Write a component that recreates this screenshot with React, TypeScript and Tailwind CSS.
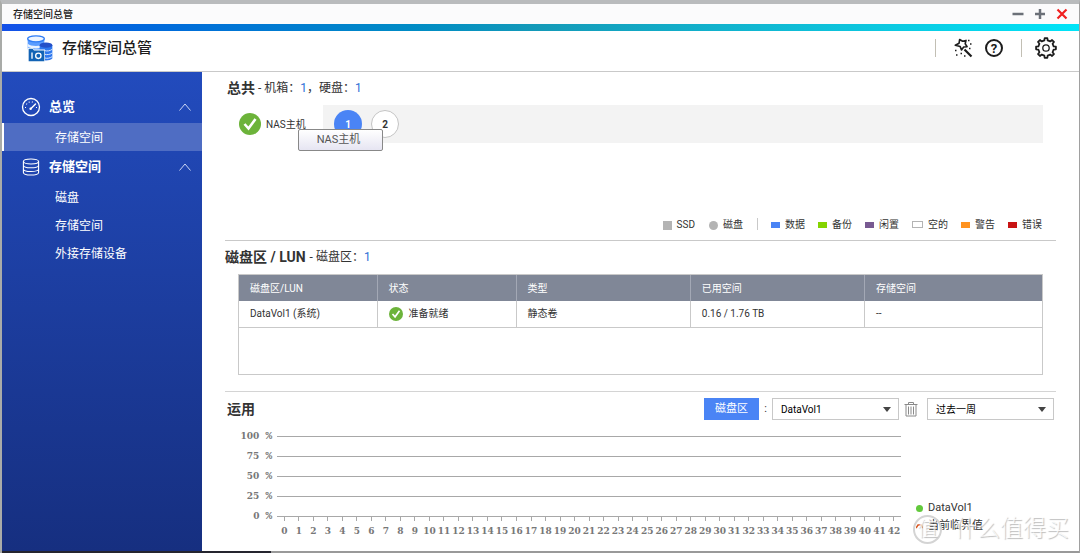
import type { ReactNode } from "react";

type MenuItem = { label: string; active?: boolean };
type MenuGroup = { title: string; icon: ReactNode; items: MenuItem[] };

const MENU: MenuGroup[] = [
  {
    title: "总览",
    icon: <GaugeIcon />,
    items: [{ label: "存储空间", active: true }],
  },
  {
    title: "存储空间",
    icon: <DiskStackIcon />,
    items: [{ label: "磁盘" }, { label: "存储空间" }, { label: "外接存储设备" }],
  },
];

const LEGEND = [
  { label: "数据", color: "bg-[#4a84f5]" },
  { label: "备份", color: "bg-[#84d400]" },
  { label: "闲置", color: "bg-[#785a92]" },
  { label: "空的", color: "border border-[#b4b4b4] bg-white" },
  { label: "警告", color: "bg-[#ff9320]" },
  { label: "错误", color: "bg-[#c81414]" },
];

const COLUMNS = [
  { label: "磁盘区/LUN", width: "w-[17.2%]" },
  { label: "状态", width: "w-[17.3%]" },
  { label: "类型", width: "w-[21.7%]" },
  { label: "已用空间", width: "w-[21.7%]" },
  { label: "存储空间", width: "w-[22.1%]" },
];

const Y_LABELS = [100, 75, 50, 25, 0];
const X_LABELS = Array.from({ length: 43 }, (_, i) => i);

function gearPath(teeth: number, outer: number, inner: number) {
  const step = (Math.PI * 2) / teeth;
  const points: string[] = [];
  for (let i = 0; i < teeth; i++) {
    const a = i * step - Math.PI / 2;
    const corners = [
      [outer, -0.17],
      [outer, 0.17],
      [inner, 0.27],
      [inner, 0.73],
    ];
    for (const [r, t] of corners) {
      const x = 12 + r * Math.cos(a + t * step);
      const y = 12 + r * Math.sin(a + t * step);
      points.push(`${x.toFixed(2)} ${y.toFixed(2)}`);
    }
  }
  return `M${points.join("L")}Z`;
}

function LogoIcon() {
  return (
    <svg viewBox="0 0 78 80" className="h-[27px] w-[26px] shrink-0" aria-hidden="true">
      <path d="M2 10v32c8 8 42 8 50 0V10z" fill="#5b9dff" />
      <path d="M2 26c10 9 40 9 50 0v8c-10 8-40 8-50 0z" fill="#e8f2ff" />
      <ellipse cx="27" cy="11" rx="25" ry="9" fill="#eef5ff" stroke="#2f7df6" strokeWidth="4" />
      <path d="M38 30v40c6 8 32 8 38 0V30z" fill="#2f78ee" />
      <path d="M52 46c8 3 18 1 24-4M52 57c8 3 18 1 24-4M52 68c8 3 18 1 24-4" fill="none" stroke="#d7e8ff" strokeWidth="3" />
      <ellipse cx="57" cy="30" rx="19" ry="8" fill="#2450c8" />
      <path d="M2 38h15l4 5h33v37H2z" fill="#fff" />
      <path d="M5 41h12l4 5h31v32H5z" fill="#1263b5" />
      <path d="M15 52v19" stroke="#fff" strokeWidth="4" />
      <circle cx="34" cy="62" r="8" fill="none" stroke="#fff" strokeWidth="4" />
    </svg>
  );
}

function GaugeIcon() {
  return (
    <svg viewBox="0 0 20 20" className="h-5 w-5" fill="none" stroke="currentColor" aria-hidden="true">
      <circle cx="10" cy="10" r="8.5" strokeWidth="1.3" />
      <path d="M4 10.5h1M5.3 6.7l.8.6M8 4.6l.4 1M11.5 4.5l-.2 1M15 10.5h1" strokeWidth="1.2" />
      <path d="M10 11.5l4.5-4.5" strokeWidth="1.5" strokeLinecap="round" />
      <circle cx="9.6" cy="11.8" r="1.2" fill="currentColor" stroke="none" />
    </svg>
  );
}

function DiskStackIcon() {
  return (
    <svg viewBox="0 0 20 20" className="h-5 w-5" fill="none" stroke="currentColor" strokeWidth="1.1" aria-hidden="true">
      <ellipse cx="10" cy="4.5" rx="7.6" ry="2.5" />
      <path d="M2.4 4.5v11c0 3.4 15.2 3.4 15.2 0v-11M2.4 8.2c0 3.4 15.2 3.4 15.2 0M2.4 11.9c0 3.4 15.2 3.4 15.2 0" />
    </svg>
  );
}

function WandIcon() {
  return (
    <svg viewBox="0 0 20 20" className="h-5 w-5" fill="none" stroke="currentColor" aria-hidden="true">
      <path d="M6.6 1.5l3 1.8 3.4-.9-.8 3.4 1.9 2.9-3.4.3-2.2 2.9-1.3-3.3-4.9-1.4 3.800-2z" strokeWidth="1.6" strokeLinejoin="round" />
      <path d="M11.500 11.500l7 7" strokeWidth="2.200" />
      <path d="M15 2.500h1.500M17 6h1.500M16 10.500h1.500M2 12.500h1.500M3 17h1.500M7.500 15.500h1.500M11 18h1.500" strokeWidth="1.300" />
    </svg>
  );
}

function GearIcon() {
  return (
    <svg viewBox="0 0 24 24" className="h-6 w-6" fill="none" stroke="currentColor" strokeLinejoin="round" aria-hidden="true">
      <path d={gearPath(8, 10, 7.8)} strokeWidth="1.8" />
      <circle cx="12" cy="12" r="3.2" strokeWidth="1.3" />
    </svg>
  );
}

function CheckBadge({ className }: { className: string }) {
  return (
    <svg viewBox="0 0 22 22" className={className} role="img" aria-label="正常">
      <circle cx="11" cy="11" r="11" fill="#6cb33a" />
      <path d="M5.500 11l4 4.500 7-9.500" fill="none" stroke="#fff" strokeWidth="2.600" />
    </svg>
  );
}

function TrashIcon() {
  return (
    <svg viewBox="0 0 14 16" className="h-4 w-3.5" fill="none" stroke="currentColor" aria-hidden="true">
      <path d="M.5 3.500h13M4.500 3V1.500h5V3M2 4v11h10V4M4.500 5.500v8M7 5.500v8M9.500 5.500v8" />
    </svg>
  );
}

function Select({ label, options }: { label: string; options: string[] }) {
  return (
    <div className="relative w-[127px]">
      <select
        aria-label={label}
        className="h-[22px] w-full appearance-none border border-[#c8c8c8] bg-white pl-2 text-[10px] text-black"
      >
        {options.map((o) => (
          <option key={o}>{o}</option>
        ))}
      </select>
      <svg viewBox="0 0 8 5" className="pointer-events-none absolute right-2 top-[9px] h-[5px] w-2" aria-hidden="true">
        <path d="M0 0h8L4 5z" fill="#444" />
      </svg>
    </div>
  );
}

function TitleBar() {
  return (
    <div className="flex h-5 items-center justify-between bg-[#fbfbfc] pl-[11px] pr-[11px] text-[10px] text-[#222]">
      <span className="font-medium">存储空间总管</span>
      <div className="flex items-center gap-2.5 text-[#6b7078]">
        <button type="button" aria-label="最小化">
          <svg viewBox="0 0 12 12" className="h-3 w-3" stroke="currentColor" strokeWidth="2.500">
            <path d="M.5 6h11" />
          </svg>
        </button>
        <button type="button" aria-label="最大化">
          <svg viewBox="0 0 12 12" className="h-3 w-3" stroke="currentColor" strokeWidth="2.500">
            <path d="M1 6h10M6 1v10" />
          </svg>
        </button>
        <button type="button" aria-label="关闭" className="text-[#f02020]">
          <svg viewBox="0 0 12 12" className="h-3 w-3" stroke="currentColor" strokeWidth="2.200">
            <path d="M1.500 1.500l9 9M10.500 1.500l-9 9" />
          </svg>
        </button>
      </div>
    </div>
  );
}

function Header() {
  return (
    <header className="flex h-[41px] items-center border-b border-[#c9c9c9] bg-white pb-1.5 pl-[25px] pr-[21px] text-[#1c1c1c]">
      <LogoIcon />
      <h1 className="ml-[9px] text-[15px] font-medium leading-5">存储空间总管</h1>
      <div className="ml-auto flex items-center">
        <span className="h-[18px] w-px bg-[#c2bfb4]" />
        <button type="button" aria-label="工具" className="ml-[17px]">
          <WandIcon />
        </button>
        <button
          type="button"
          aria-label="帮助"
          className="ml-3 flex h-[18px] w-[18px] items-center justify-center rounded-full border-2 border-[#1c1c1c] text-[13px] font-bold leading-none"
        >
          ?
        </button>
        <span className="ml-[18px] h-[18px] w-px bg-[#c2bfb4]" />
        <button type="button" aria-label="设置" className="ml-3">
          <GearIcon />
        </button>
      </div>
    </header>
  );
}

function Sidebar() {
  return (
    <nav className="w-[200px] shrink-0 bg-linear-to-b from-[#224bbd] to-[#162f80] pt-[19px] text-white">
      {MENU.map((group) => (
        <div key={group.title}>
          <button type="button" className="flex h-8 w-full items-center pl-[19px] pr-[11px] text-[13px] font-bold">
            {group.icon}
            <span className="ml-2">{group.title}</span>
            <svg viewBox="0 0 12 8" className="ml-auto h-2 w-3" fill="none" stroke="#c9d5f5" aria-hidden="true">
              <path d="M.5 7.500L6 1l5.500 6.500" />
            </svg>
          </button>
          <ul>
            {group.items.map((item) => (
              <li key={item.label}>
                <a
                  href="#"
                  className={
                    item.active
                      ? "flex h-7 items-center border-l-2 border-white bg-[#4f6dc3] pl-[51px] pt-px text-xs"
                      : "flex h-7 items-center pl-[53px] pt-px text-xs"
                  }
                >
                  {item.label}
                </a>
              </li>
            ))}
          </ul>
        </div>
      ))}
    </nav>
  );
}

function Overview() {
  return (
    <section className="border-b border-[#c9c9c9] pb-2 pt-2">
      <h2 className="flex h-4 items-center pl-0.5 text-xs">
        <span className="text-sm font-bold">总共</span>
        <span className="ml-[3px]">- 机箱：</span>
        <span className="text-[#2f6fd6]">1</span>，硬盘：
        <span className="text-[#2f6fd6]">1</span>
      </h2>

      <div className="relative ml-[14px] mr-[13px] mt-[9px] flex h-[38px] items-center">
        <CheckBadge className="h-[22px] w-[22px]" />
        <span className="ml-[5px] w-[57px] text-[10px]">NAS主机</span>
        <div className="flex h-full flex-1 items-center gap-[9px] bg-[#f3f3f3] pl-[11px] text-[10px] font-bold">
          <button type="button" className="h-7 w-7 rounded-full bg-[#4a84f5] text-white">
            1
          </button>
          <button type="button" className="h-7 w-7 rounded-full border border-[#c4c4c4] bg-white">
            2
          </button>
        </div>
        <div
          role="tooltip"
          className="absolute left-[59px] top-6 flex h-[22px] w-[85px] items-center justify-center rounded-xs border border-[#888] bg-linear-to-b from-white to-[#e6e5f2] pr-1 text-[11px] text-[#555]"
        >
          NAS主机
        </div>
      </div>

      <div className="mr-[14px] mt-[73px] flex h-4 items-center justify-end text-[10px]">
        <span className="mr-[5px] mt-0.5 h-[9px] w-[9px] bg-[#b4b4b4]" />
        SSD
        <span className="ml-3.5 mr-[5px] mt-0.5 h-[9px] w-[9px] rounded-full bg-[#b4b4b4]" />
        磁盘
        <span className="ml-3.5 h-3 w-px bg-[#c9c9c9]" />
        {LEGEND.map((entry) => (
          <span key={entry.label} className="ml-[13px] flex items-center gap-[5px]">
            <span
              className={
                entry.label === "空的"
                  ? `mt-px h-[7px] w-[11px] ${entry.color}`
                  : `mt-0.5 h-[6px] w-[9px] ${entry.color}`
              }
            />
            {entry.label}
          </span>
        ))}
      </div>
    </section>
  );
}

function Volumes() {
  return (
    <section className="border-b border-[#d4d4d4] pb-4 pt-2">
      <h2 className="flex h-4 items-center text-xs">
        <span className="text-sm font-bold">磁盘区 / LUN</span>
        <span className="ml-1">- 磁盘区：</span>
        <span className="text-[#2f6fd6]">1</span>
      </h2>

      <div className="ml-[13px] mr-[13px] mt-[9px] min-h-[101px] border border-[#c9c9c9]">
        <table className="w-full table-fixed border-collapse text-left text-[10px]">
          <thead className="bg-[#808797] text-white">
            <tr className="h-[26px]">
              {COLUMNS.map((c) => (
                <th key={c.label} className={`${c.width} border-r border-[#a3a8b5] pl-[11px] font-normal last:border-r-0`}>
                  {c.label}
                </th>
              ))}
            </tr>
          </thead>
          <tbody>
            <tr className="h-[26px] border-b border-[#c9c9c9] *:border-r *:border-[#c9c9c9] *:pl-[11px] *:last:border-r-0">
              <td>DataVol1 (系统)</td>
              <td>
                <span className="flex items-center gap-1.5">
                  <CheckBadge className="h-3.5 w-3.5" />
                  准备就绪
                </span>
              </td>
              <td>静态卷</td>
              <td>0.16 / 1.76 TB</td>
              <td>--</td>
            </tr>
          </tbody>
        </table>
      </div>
    </section>
  );
}

function UsageChart() {
  return (
    <div className="mt-1.5 flex font-['DejaVu_Serif',serif] text-[9px] font-bold text-[#777]">
      <div className="mr-[5px] w-[47px]">
        {Y_LABELS.map((y) => (
          <div key={y} className="flex h-5 items-center justify-end gap-1.5 leading-none">
            {y}
            <span className="font-['Liberation_Mono',monospace] text-[11px]">%</span>
          </div>
        ))}
      </div>
      <div className="flex-1 pt-2.5">
        {Y_LABELS.slice(1).map((y) => (
          <div key={y} className="h-5 border-t border-[#a8a8a8]" />
        ))}
        <div className="flex border-t border-[#a8a8a8]">
          {X_LABELS.map((x) => (
            <div key={x} className="flex w-0 flex-1 flex-col items-center">
              <span className="h-1 w-px bg-[#a8a8a8]" />
              <span className="mt-1 leading-3">{x}</span>
            </div>
          ))}
        </div>
      </div>
      <ul className="flex w-[155px] flex-col justify-end pb-0.5 pl-[15px] font-[Roboto,'Noto_Sans_CJK_SC',sans-serif] text-[11px] font-normal text-[#333]">
        <li className="flex h-[18px] items-center gap-[5px]">
          <span className="h-[7px] w-[7px] rounded-full bg-[#62c93c]" />
          DataVol1
        </li>
        <li className="flex h-[18px] items-center gap-[5px]">
          <svg viewBox="0 0 7 7" className="h-[7px] w-[7px]" fill="none" stroke="#d9581e" strokeWidth="1.500" aria-hidden="true">
            <path d="M0 5l2-3h3l2 3" />
          </svg>
          当前临界值
        </li>
      </ul>
    </div>
  );
}

function Usage() {
  return (
    <section className="pt-[6px]">
      <div className="flex h-[22px] items-center pr-0.5 text-[11px]">
        <h2 className="mr-auto pl-0.5 text-sm font-bold">运用</h2>
        <button type="button" className="h-[22px] w-[55px] bg-[#4a84f5] text-white">
          磁盘区
        </button>
        <span className="w-[13px] text-center">:</span>
        <Select label="磁盘区" options={["DataVol1"]} />
        <button type="button" aria-label="删除" className="mx-[5px] w-[18px] text-[#8a8a8a]">
          <TrashIcon />
        </button>
        <Select label="时间范围" options={["过去一周"]} />
      </div>
      <UsageChart />
    </section>
  );
}

function Watermark() {
  return (
    <div className="pointer-events-none absolute bottom-2 right-2.5 flex items-center gap-3 text-[23px] font-light leading-8 text-white/80 [text-shadow:1px_1px_1px_#bbb]">
      <span className="flex h-[29px] w-[29px] items-center justify-center rounded-full border-2 border-[#d4d4d4] text-xl">
        值
      </span>
      什么值得买
    </div>
  );
}

export default function App() {
  return (
    <div className="relative flex min-h-screen flex-col border-l-2 border-r border-t-4 border-l-[#a9aba8] border-r-[#a0a0a0] border-t-[#b9bbbd] bg-white font-[Roboto,'Noto_Sans_CJK_SC',sans-serif] text-[#333]">
      <TitleBar />
      <div className="h-[7px] bg-linear-to-r from-[#1450e8] via-[#149ab8] to-[#00e4f8]" />
      <Header />
      <div className="flex flex-1">
        <Sidebar />
        <main className="min-w-0 flex-1 px-[23px]">
          <Overview />
          <Volumes />
          <Usage />
        </main>
      </div>
      <div className="flex h-0.5 bg-[#999]">
        <span className="w-1/4 bg-[#25252f]" />
      </div>
      <Watermark />
    </div>
  );
}
